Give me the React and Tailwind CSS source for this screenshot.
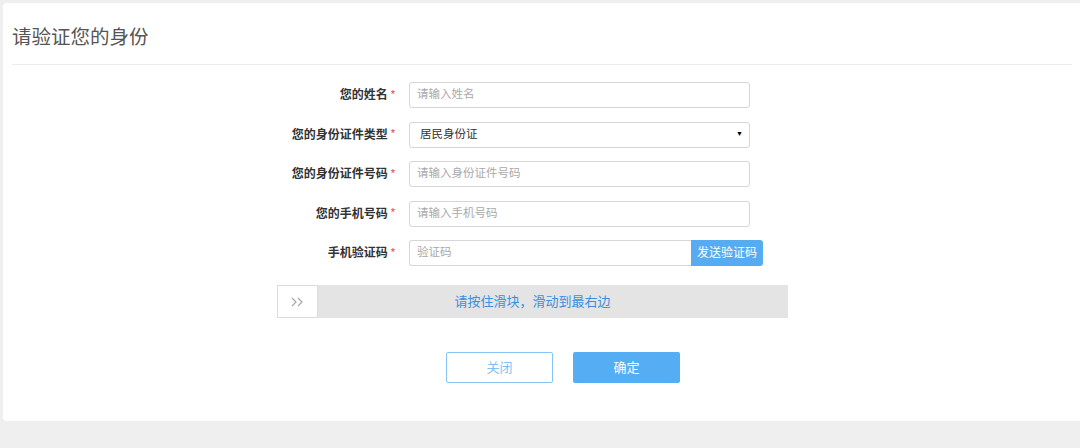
import React from "react";

const font = { fontFamily: '"Liberation Sans", "Noto Sans CJK SC", sans-serif' };

function Row({ label, children }) {
  return (
    <div className="flex items-center h-[26px]">
      <div className="w-[392px] flex justify-end items-center text-[12px] font-bold text-[#333]">
        <span>{label}</span>
        <span className="ml-[3px] text-[#e4393c] font-normal text-[11px] leading-none -mt-[2px]">*</span>
      </div>
      <div className="ml-[14px] flex h-[26px]">{children}</div>
    </div>
  );
}

function Input({ placeholder, w = "w-[341px]" }) {
  return (
    <div className={`${w} h-[26px] border border-[#d6d6d6] rounded-[3px] flex items-center pl-[7px] text-[11.5px] text-[#a9a9a9] bg-white`}>
      {placeholder}
    </div>
  );
}

export default function App() {
  return (
    <div className="w-[1080px] h-[448px] bg-[#efefef] overflow-hidden pt-[3px] pl-[3px]" style={font}>
      <div className="w-[1080px] h-[418px] bg-white rounded-[4px] flex flex-col">
        <div className="ml-[9px] mr-[11px] pt-[22px] pb-[15px] border-b border-[#ececec]">
          <div className="text-[19.5px] leading-[24px] text-[#555]">请验证您的身份</div>
        </div>
        <div className="mt-[17px] flex flex-col gap-[13.5px]">
          <Row label="您的姓名"><Input placeholder="请输入姓名" /></Row>
          <Row label="您的身份证件类型">
            <div className="w-[341px] h-[26px] border border-[#d6d6d6] rounded-[3px] flex items-center justify-between pl-[10px] pr-[6px] text-[11.5px] text-[#333] bg-white">
              <span>居民身份证</span>
              <span className="text-[7px] text-black">▼</span>
            </div>
          </Row>
          <Row label="您的身份证件号码"><Input placeholder="请输入身份证件号码" /></Row>
          <Row label="您的手机号码"><Input placeholder="请输入手机号码" /></Row>
          <Row label="手机验证码">
            <div className="w-[282px] h-[26px] border border-[#d6d6d6] border-r-0 rounded-l-[3px] flex items-center pl-[7px] text-[11.5px] text-[#a9a9a9]">
              验证码
            </div>
            <div className="w-[72px] h-[26px] bg-[#57abf1] rounded-r-[3px] flex items-center justify-center text-[12px] text-white">
              发送验证码
            </div>
          </Row>
        </div>
        <div className="ml-[274px] mt-[19px] w-[511px] h-[33px] bg-[#e4e4e4] relative flex items-center justify-center">
          <div className="absolute left-0 top-0 w-[41px] h-[33px] bg-white border border-[#dcdcdc] flex items-center justify-center">
            <svg width="14" height="10" viewBox="0 0 14 10" fill="none" stroke="#a8a8a8" strokeWidth="1.2">
              <path d="M1 1l4 4-4 4M7 1l4 4-4 4" />
            </svg>
          </div>
          <span className="text-[13px] text-[#3a8ee0]">请按住滑块，滑动到最右边</span>
        </div>
        <div className="ml-[443px] mt-[34px] flex gap-[20px]">
          <div className="w-[107px] h-[31px] border border-[#85c4f6] rounded-[2px] flex items-center justify-center text-[13px] text-[#7fbff3]">
            关闭
          </div>
          <div className="w-[107px] h-[31px] bg-[#55adf3] rounded-[2px] flex items-center justify-center text-[13px] text-white">
            确定
          </div>
        </div>
      </div>
    </div>
  );
}
